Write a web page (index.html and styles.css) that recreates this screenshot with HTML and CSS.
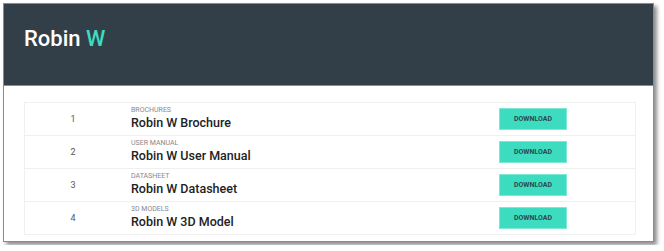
FILE: index.html
```html
<!DOCTYPE html>
<html lang="en">
<head>
    <meta charset="UTF-8">
    <title>Robin W Downloads</title>
    <link rel="stylesheet" href="styles.css">
</head>
<body>
    <div class="frame">
        <header class="page-header">
            <h1 class="brand">Robin <span class="brand-accent">W</span></h1>
        </header>

        <div class="downloads">
            <div class="download-row">
                <div class="row-num">1</div>
                <div class="row-info">
                    <div class="row-category">BROCHURES</div>
                    <div class="row-title">Robin W Brochure</div>
                </div>
                <div class="row-action"><button class="download-button">DOWNLOAD</button></div>
            </div>
            <div class="download-row">
                <div class="row-num">2</div>
                <div class="row-info">
                    <div class="row-category">USER MANUAL</div>
                    <div class="row-title">Robin W User Manual</div>
                </div>
                <div class="row-action"><button class="download-button">DOWNLOAD</button></div>
            </div>
            <div class="download-row">
                <div class="row-num">3</div>
                <div class="row-info">
                    <div class="row-category">DATASHEET</div>
                    <div class="row-title">Robin W Datasheet</div>
                </div>
                <div class="row-action"><button class="download-button">DOWNLOAD</button></div>
            </div>
            <div class="download-row">
                <div class="row-num">4</div>
                <div class="row-info">
                    <div class="row-category">3D MODELS</div>
                    <div class="row-title">Robin W 3D Model</div>
                </div>
                <div class="row-action"><button class="download-button">DOWNLOAD</button></div>
            </div>
        </div>
    </div>
</body>
</html>
```

FILE: styles.css
```css
body {
    margin: 0;
    padding: 3px;
    background-color: #fff;
    font-family: Roboto, Arial, sans-serif;
}

.frame {
    width: 649px;
    height: 237px;
    border: 1px solid #8a8d90;
    background-color: #fff;
    box-shadow: 3px 3px 4px rgba(0,0,0,0.45);
}

.page-header {
    height: 81px;
    background-color: #333f48;
    border-bottom: 1px solid #8a8d90;
    display: flex;
    align-items: center;
    padding-left: 20px;
}

.brand {
    margin: 0;
    font-size: 22px;
    font-weight: 500;
    color: #fff;
    padding-bottom: 12px;
}

.brand-accent {
    color: #3ddbbf;
}

.downloads {
    margin: 16px 17px 0 20px;
    border: 1px solid #f0f0f0;
}

.download-row {
    display: grid;
    grid-template-columns: 96px 1fr 136px;
    height: 32px;
    align-items: center;
    border-top: 1px solid #f0f0f0;
}

.download-row:first-child {
    border-top: none;
}

.row-num {
    text-align: center;
    font-size: 9px;
    color: #555;
}

.row-info {
    padding-left: 10px;
    padding-bottom: 2px;
}

.row-category {
    font-size: 7px;
    color: #888;
    line-height: 9px;
}

.row-title {
    font-size: 12.5px;
    font-weight: 500;
    color: #222;
    line-height: 16px;
}

.row-action {
    display: flex;
}

.download-button {
    width: 68px;
    height: 22px;
    border: 1px solid #7fe8d4;
    background-color: #3ddbbf;
    color: #2c4a4d;
    font-family: Roboto, Arial, sans-serif;
    font-size: 7px;
    font-weight: 700;
    padding: 0;
    cursor: pointer;
}
```
